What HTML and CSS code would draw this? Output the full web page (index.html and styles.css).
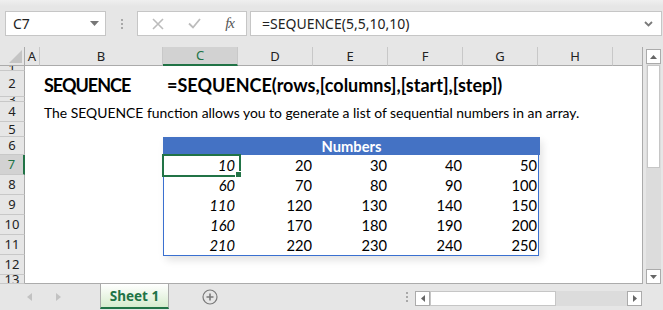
FILE: index.html
```html
<!DOCTYPE html>
<html lang="en">
<head>
    <meta charset="UTF-8">
    <title>SEQUENCE</title>
    <link rel="stylesheet" href="styles.css">
</head>
<body>
    <div class="app">
        <div class="formula-bar">
            <div class="name-box">
                <span>C7</span>
                <svg class="caret" width="9" height="5" viewBox="0 0 9 5"><path d="M0 0h9L4.5 5z" fill="#777"/></svg>
            </div>
            <div class="grip"><i></i><i></i><i></i></div>
            <div class="fn-buttons">
                <svg width="12" height="12" viewBox="0 0 12 12"><path d="M1 1l10 10M11 1L1 11" stroke="#bcbcbc" stroke-width="1.6"/></svg>
                <svg width="13" height="11" viewBox="0 0 13 11"><path d="M1 5.5l4 4L12 1" stroke="#bcbcbc" stroke-width="1.8" fill="none"/></svg>
                <span class="fx">fx</span>
            </div>
            <div class="formula-input">
                <span>=SEQUENCE(5,5,10,10)</span>
                <svg width="9" height="6" viewBox="0 0 9 6"><path d="M1 1l3.5 3.5L8 1" stroke="#7a7a7a" stroke-width="1.8" fill="none"/></svg>
            </div>
        </div>

        <div class="workspace">
            <div class="sheet">
                <div class="corner"><svg width="13" height="13" viewBox="0 0 13 13"><path d="M13 0v13H0z" fill="#c4c4c4"/></svg></div>
                <div class="col-head">A</div>
                <div class="col-head">B</div>
                <div class="col-head active">C</div>
                <div class="col-head">D</div>
                <div class="col-head">E</div>
                <div class="col-head">F</div>
                <div class="col-head">G</div>
                <div class="col-head">H</div>
                <div class="col-head last"></div>

                <div class="row-head">1</div>
                <div class="row-head">2</div>
                <div class="row-head">3</div>
                <div class="row-head">4</div>
                <div class="row-head">5</div>
                <div class="row-head">6</div>
                <div class="row-head active">7</div>
                <div class="row-head">8</div>
                <div class="row-head">9</div>
                <div class="row-head">10</div>
                <div class="row-head">11</div>
                <div class="row-head">12</div>
                <div class="row-head">13</div>

                <div class="cells">
                    <div class="title">SEQUENCE</div>
                    <div class="syntax">=SEQUENCE(rows,[columns],[start],[step])</div>
                    <div class="desc">The SEQUENCE function allows you to generate a list of sequential numbers in an array.</div>

                    <div class="numbers">
                        <div class="numbers-head">Numbers</div>
                        <div class="num first selected">10</div><div class="num">20</div><div class="num">30</div><div class="num">40</div><div class="num">50</div>
                        <div class="num first">60</div><div class="num">70</div><div class="num">80</div><div class="num">90</div><div class="num">100</div>
                        <div class="num first">110</div><div class="num">120</div><div class="num">130</div><div class="num">140</div><div class="num">150</div>
                        <div class="num first">160</div><div class="num">170</div><div class="num">180</div><div class="num">190</div><div class="num">200</div>
                        <div class="num first">210</div><div class="num">220</div><div class="num">230</div><div class="num">240</div><div class="num">250</div>
                    </div>
                </div>
            </div>

            <div class="vscroll">
                <div class="sb-btn">
                    <svg width="7" height="4" viewBox="0 0 7 4"><path d="M0 4h7L3.5 0z" fill="#666"/></svg>
                </div>
                <div class="v-track">
                    <div class="v-thumb"></div>
                </div>
                <div class="sb-btn">
                    <svg width="7" height="4" viewBox="0 0 7 4"><path d="M0 0h7L3.5 4z" fill="#666"/></svg>
                </div>
            </div>
        </div>

        <div class="tab-bar">
            <div class="tab-nav">
                <svg width="5" height="8" viewBox="0 0 5 8"><path d="M5 0v8L0 4z" fill="#c2c2c2"/></svg>
                <svg width="5" height="8" viewBox="0 0 5 8"><path d="M0 0v8l5-4z" fill="#c2c2c2"/></svg>
            </div>
            <div class="sheet-tab">Sheet 1</div>
            <svg class="add-sheet" width="16" height="16" viewBox="0 0 16 16">
                <circle cx="8" cy="8" r="7" stroke="#7a7a7a" stroke-width="1.2" fill="none"/>
                <path d="M8 4.5v7M4.5 8h7" stroke="#7a7a7a" stroke-width="1.6"/>
            </svg>
            <div class="spacer"></div>
            <div class="grip small"><i></i><i></i><i></i></div>
            <div class="hscroll">
                <div class="sb-btn">
                    <svg width="4" height="7" viewBox="0 0 4 7"><path d="M4 0v7L0 3.5z" fill="#666"/></svg>
                </div>
                <div class="h-thumb"></div>
                <div class="h-track"></div>
                <div class="sb-btn">
                    <svg width="4" height="7" viewBox="0 0 4 7"><path d="M0 0v7l4-3.5z" fill="#666"/></svg>
                </div>
            </div>
        </div>
    </div>
</body>
</html>
```

FILE: styles.css
```css
body {
    margin: 0;
    padding: 0;
    background-color: #e6e6e6;
    font-family: 'Noto Sans', 'Open Sans', sans-serif;
}

.app {
    width: 663px;
    height: 310px;
    overflow: hidden;
    background-color: #e6e6e6;
}

/* formula bar */
.formula-bar {
    height: 47px;
    display: flex;
    align-items: flex-start;
    padding: 11px 0 0 5px;
    box-sizing: border-box;
    background: linear-gradient(#efefef, #e6e6e6 6px);
}

.name-box,
.fn-buttons,
.formula-input {
    height: 25px;
    box-sizing: border-box;
    background: white;
    border: 1px solid #c6c6c6;
    display: flex;
    align-items: center;
}

.name-box {
    width: 101px;
    padding: 0 6px 0 7px;
    justify-content: space-between;
    font-size: 14px;
    color: #222;
}

.grip {
    width: 31px;
    height: 25px;
    display: flex;
    flex-direction: column;
    align-items: center;
    justify-content: center;
    gap: 2px;
}

.grip i {
    display: block;
    width: 2px;
    height: 2px;
    background: #a8a8a8;
}

.fn-buttons {
    width: 110px;
    padding: 0 12px 0 14px;
    justify-content: space-between;
}

.fx {
    font-family: 'Liberation Serif', serif;
    font-style: italic;
    font-size: 15px;
    color: #555;
    letter-spacing: -1px;
}

.formula-input {
    flex: 1;
    margin-left: 3px;
    margin-right: 1px;
    padding: 0 8px 0 11px;
    justify-content: space-between;
    font-size: 14px;
    color: #222;
}

/* sheet */
.workspace {
    display: flex;
    height: 237px;
}

.sheet {
    width: 643px;
    display: grid;
    grid-template-columns: 25px 15px 123px repeat(6, 75px) 29px;
    grid-template-rows: 19px 5px 26px 5px 20px 15px 18px repeat(6, 20px) 9px;
    border-right: 1px solid #ababab;
    box-sizing: border-box;
    font-family: 'Noto Sans', 'Open Sans', sans-serif;
}

.corner {
    border-right: 1px solid #ababab;
    border-bottom: 1px solid #ababab;
    display: flex;
    align-items: flex-end;
    justify-content: flex-end;
    padding: 0 2px 2px 0;
}

.col-head {
    border-right: 1px solid #c8c8c8;
    border-bottom: 1px solid #ababab;
    font-size: 13px;
    color: #222;
    display: flex;
    align-items: center;
    justify-content: center;
    line-height: 1;
}

.col-head.last {
    border-right: none;
}

.col-head.active {
    background: #d2d2d2;
    color: #217346;
    border-bottom: 2px solid #217346;
}

.row-head {
    grid-column: 1;
    border-right: 1px solid #ababab;
    border-bottom: 1px solid #c8c8c8;
    font-size: 13px;
    color: #222;
    display: flex;
    align-items: center;
    justify-content: center;
    overflow: hidden;
    line-height: 1;
}

.row-head:last-of-type {
    border-bottom: none;
}

.row-head.active {
    background: #d2d2d2;
    color: #217346;
    border-right: 2px solid #217346;
}

.cells {
    grid-row: 2 / 15;
    grid-column: 2 / 11;
    background: white;
    border-bottom: 1px solid #ababab;
    display: grid;
    grid-template-columns: 15px 123px repeat(6, 75px) 29px;
    grid-template-rows: 5px 26px 5px 20px 15px 18px repeat(6, 20px) 8px;
    font-family: 'Lato', 'Liberation Sans', sans-serif;
    color: #000;
}

.title,
.syntax {
    grid-row: 2;
    align-self: end;
    font-size: 18px;
    font-weight: bold;
    white-space: nowrap;
    padding-left: 4px;
    line-height: 24px;
}

.title {
    grid-column: 2;
    letter-spacing: -1px;
}

.syntax {
    grid-column: 3 / 10;
}

.desc {
    grid-row: 4;
    grid-column: 2 / 10;
    align-self: end;
    font-size: 13.9px;
    white-space: nowrap;
    padding-left: 4px;
    line-height: 19px;
}

.numbers {
    grid-row: 6 / 12;
    grid-column: 3 / 8;
    display: grid;
    grid-template-columns: repeat(5, 75px);
    grid-template-rows: 18px repeat(5, 20px);
    border: 1px solid #3a70d0;
    border-top: none;
    margin-right: -1px;
    margin-bottom: -1px;
    box-shadow: 3px 4px 8px rgba(0, 0, 0, 0.12);
    font-size: 14.7px;
}

.numbers-head {
    grid-column: 1 / 6;
    margin: 0 -1px;
    background: #4472c4;
    color: white;
    font-weight: bold;
    text-align: center;
    line-height: 18px;
}

.num {
    text-align: right;
    padding-right: 2px;
    line-height: 21px;
}

.num.first {
    font-style: italic;
    padding-right: 4px;
}

.num.selected {
    position: relative;
}

.num.selected::before {
    content: '';
    position: absolute;
    left: -2px;
    top: -1px;
    right: -2px;
    bottom: -2px;
    border: 2px solid #217346;
}

.num.selected::after {
    content: '';
    position: absolute;
    right: -3px;
    bottom: -3px;
    width: 5px;
    height: 5px;
    background: #217346;
    border: 1px solid white;
}

/* vertical scrollbar */
.vscroll {
    width: 20px;
    display: flex;
    flex-direction: column;
    padding: 2px 2px 0 3px;
    box-sizing: border-box;
}

.sb-btn {
    width: 15px;
    height: 15px;
    box-sizing: border-box;
    background: white;
    border: 1px solid #ababab;
    display: flex;
    align-items: center;
    justify-content: center;
    flex-shrink: 0;
}

.v-track {
    flex: 1;
    background: #dcdcdc;
    padding: 1px 0;
}

.v-thumb {
    height: 101px;
    background: white;
    border: 1px solid #c6c6c6;
    margin: 0 1px;
}

/* sheet tabs */
.tab-bar {
    height: 26px;
    display: flex;
    align-items: flex-start;
}

.tab-nav {
    width: 100px;
    height: 26px;
    display: flex;
    align-items: center;
    gap: 24px;
    padding-left: 27px;
    box-sizing: border-box;
}

.sheet-tab {
    width: 69px;
    height: 25px;
    box-sizing: border-box;
    background: linear-gradient(white, #d7ecce);
    border-left: 1px solid #ababab;
    border-right: 1px solid #ababab;
    border-bottom: 2px solid #217346;
    color: #217346;
    font-family: 'Noto Sans', 'Open Sans', sans-serif;
    font-weight: bold;
    font-size: 13.5px;
    text-align: center;
    line-height: 24px;
}

.add-sheet {
    margin: 5px 0 0 33px;
}

.spacer {
    flex: 1;
}

.grip.small {
    width: 16px;
    height: 26px;
}

.hscroll {
    display: flex;
    margin: 7px 21px 0 0;
    width: 227px;
    height: 15px;
}

.h-thumb {
    width: 126px;
    background: white;
    border: 1px solid #c6c6c6;
    box-sizing: border-box;
}

.h-track {
    flex: 1;
    background: #dcdcdc;
}
```
